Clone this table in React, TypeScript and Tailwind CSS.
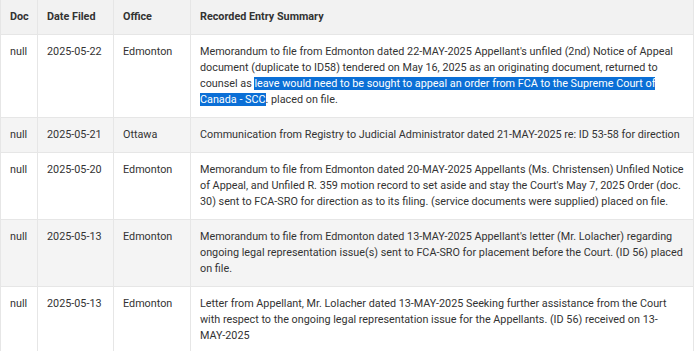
const rows = [
  {
    doc: 'null',
    date: '2025-05-22',
    office: 'Edmonton',
    summary: (
      <>
        Memorandum to file from Edmonton dated 22-MAY-2025 Appellant's unfiled (2nd) Notice of Appeal
        document (duplicate to ID58) tendered on May 16, 2025 as an originating document, returned to
        counsel as{' '}
        <span className="bg-[#0b6fd6] text-white">
          leave would need to be sought to appeal an order from FCA to the Supreme Court of Canada - SCC
        </span>
        . placed on file.
      </>
    ),
  },
  {
    doc: 'null',
    date: '2025-05-21',
    office: 'Ottawa',
    summary: 'Communication from Registry to Judicial Administrator dated 21-MAY-2025 re: ID 53-58 for direction',
  },
  {
    doc: 'null',
    date: '2025-05-20',
    office: 'Edmonton',
    summary:
      "Memorandum to file from Edmonton dated 20-MAY-2025 Appellants (Ms. Christensen) Unfiled Notice of Appeal, and Unfiled R. 359 motion record to set aside and stay the Court's May 7, 2025 Order (doc. 30) sent to FCA-SRO for direction as to its filing. (service documents were supplied) placed on file.",
  },
  {
    doc: 'null',
    date: '2025-05-13',
    office: 'Edmonton',
    summary:
      "Memorandum to file from Edmonton dated 13-MAY-2025 Appellant's letter (Mr. Lolacher) regarding ongoing legal representation issue(s) sent to FCA-SRO for placement before the Court. (ID 56) placed on file.",
  },
  {
    doc: 'null',
    date: '2025-05-13',
    office: 'Edmonton',
    summary: (
      <>
        Letter from Appellant, Mr. Lolacher dated 13-MAY-2025 Seeking further assistance from the Court
        with respect to the ongoing legal representation issue for the Appellants. (ID 56) received on 13-
        <br />
        MAY-2025
      </>
    ),
  },
];

export default function App() {
  return (
    <div className="w-[700px] h-[351px] overflow-hidden bg-white font-['Roboto',sans-serif] text-[10.8px] leading-4 text-[#333]">
      <table className="w-[694px] table-fixed border-collapse">
        <colgroup>
          <col className="w-[37px]" />
          <col className="w-[76px]" />
          <col className="w-[77px]" />
          <col />
        </colgroup>
        <thead>
          <tr className="bg-[#f2f2f2]">
            {['Doc', 'Date Filed', 'Office', 'Recorded Entry Summary'].map((h) => (
              <th
                key={h}
                className="border border-t-0 border-[#e6e6e6] px-[9px] py-[9px] text-left align-top font-bold"
              >
                {h}
              </th>
            ))}
          </tr>
        </thead>
        <tbody>
          {rows.map((r, i) => (
            <tr key={i} className={i % 2 === 1 ? 'bg-[#f4f4f4]' : 'bg-white'}>
              <td className="border border-[#e6e6e6] px-[9px] py-[9px] align-top">{r.doc}</td>
              <td className="border border-[#e6e6e6] px-[9px] py-[9px] align-top">{r.date}</td>
              <td className="border border-[#e6e6e6] px-[9px] py-[9px] align-top">{r.office}</td>
              <td className="border border-[#e6e6e6] px-[9px] py-[9px] align-top">{r.summary}</td>
            </tr>
          ))}
        </tbody>
      </table>
    </div>
  );
}
